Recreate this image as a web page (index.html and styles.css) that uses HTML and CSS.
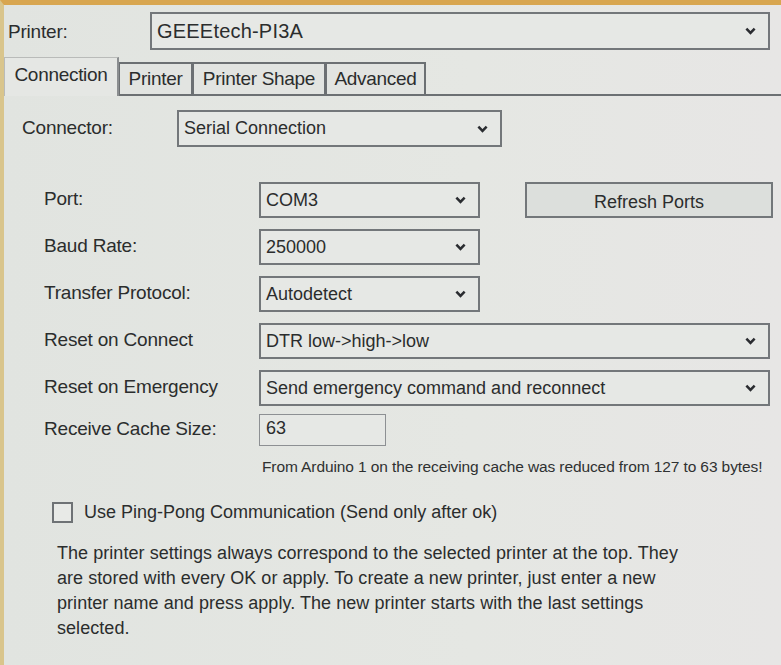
FILE: index.html
```
<!DOCTYPE html>
<html lang="en">

<head>
	<meta charset="UTF-8">
	<title>Printer Settings</title>
	<link rel="stylesheet" href="styles.css">
</head>

<body>
	<div class="window">
		<div class="printer-row">
			<span class="printer-label">Printer:</span>
			<div class="select printer-select">
				<span>GEEEtech-PI3A</span>
				<svg class="chevron" viewBox="0 0 12 8"><polyline points="1.5,1.5 6,6 10.5,1.5" /></svg>
			</div>
		</div>

		<div class="tabs">
			<div class="tab active">Connection</div>
			<div class="tab tab-printer">Printer</div>
			<div class="tab tab-shape">Printer Shape</div>
			<div class="tab tab-advanced">Advanced</div>
			<div class="tab-fill"></div>
		</div>

		<div class="panel">
			<div class="connector-row">
				<span class="connector-label">Connector:</span>
				<div class="select connector-select">
					<span>Serial Connection</span>
					<svg class="chevron" viewBox="0 0 12 8"><polyline points="1.5,1.5 6,6 10.5,1.5" /></svg>
				</div>
			</div>

			<div class="serial">
				<div class="field-row">
					<span class="field-label">Port:</span>
					<div class="select short">
						<span>COM3</span>
						<svg class="chevron" viewBox="0 0 12 8"><polyline points="1.5,1.5 6,6 10.5,1.5" /></svg>
					</div>
					<button class="refresh">Refresh Ports</button>
				</div>
				<div class="field-row">
					<span class="field-label">Baud Rate:</span>
					<div class="select short">
						<span>250000</span>
						<svg class="chevron" viewBox="0 0 12 8"><polyline points="1.5,1.5 6,6 10.5,1.5" /></svg>
					</div>
				</div>
				<div class="field-row">
					<span class="field-label">Transfer Protocol:</span>
					<div class="select short">
						<span>Autodetect</span>
						<svg class="chevron" viewBox="0 0 12 8"><polyline points="1.5,1.5 6,6 10.5,1.5" /></svg>
					</div>
				</div>
				<div class="field-row">
					<span class="field-label">Reset on Connect</span>
					<div class="select wide">
						<span>DTR low-&gt;high-&gt;low</span>
						<svg class="chevron" viewBox="0 0 12 8"><polyline points="1.5,1.5 6,6 10.5,1.5" /></svg>
					</div>
				</div>
				<div class="field-row">
					<span class="field-label">Reset on Emergency</span>
					<div class="select wide">
						<span>Send emergency command and reconnect</span>
						<svg class="chevron" viewBox="0 0 12 8"><polyline points="1.5,1.5 6,6 10.5,1.5" /></svg>
					</div>
				</div>
				<div class="field-row cache-row">
					<span class="field-label">Receive Cache Size:</span>
					<div class="text-input">63</div>
				</div>
			</div>

			<p class="note">From Arduino 1 on the receiving cache was reduced from 127 to 63 bytes!</p>

			<label class="check-row">
				<span class="checkbox"></span>
				<span>Use Ping-Pong Communication (Send only after ok)</span>
			</label>

			<p class="info">The printer settings always correspond to the selected printer at the top. They<br>
				are stored with every OK or apply. To create a new printer, just enter a new<br>
				printer name and press apply. The new printer starts with the last settings<br>
				selected.</p>
		</div>
	</div>
</body>

</html>
```

FILE: styles.css
```
html,
body {
	margin: 0;
	padding: 0;
}

body {
	width: 781px;
	height: 665px;
	overflow: hidden;
	background-color: #e3e6e2;
	font-family: 'Liberation Sans', Arial, sans-serif;
	color: #2b2d2d;
}

.window {
	height: 100%;
	box-sizing: border-box;
	border-top: 5px solid #d8a650;
	border-left: 4px solid #d9c58c;
	background: linear-gradient(90deg, #e1e4e0 0%, #e5e7e3 60%, #e7e6e5 100%);
}

.select {
	display: flex;
	align-items: center;
	justify-content: space-between;
	box-sizing: border-box;
	border: 2px solid #73777a;
	background-color: #e6e8e5;
	padding: 0 12px 0 5px;
	font-size: 18px;
}

.chevron {
	width: 11px;
	height: 8px;
	fill: none;
	stroke: #2a2c30;
	stroke-width: 2.8;
}

.printer-row {
	display: flex;
	align-items: center;
	padding: 7px 0 0 4px;
}

.printer-label {
	width: 142px;
	font-size: 19px;
	letter-spacing: -0.2px;
	padding-top: 2px;
}

.printer-select {
	width: 620px;
	height: 38px;
	padding-left: 5px;
	font-size: 20px;
	letter-spacing: 0.2px;
}

.tabs {
	display: flex;
	align-items: flex-end;
	margin-top: 7px;
	height: 39px;
}

.tab {
	box-sizing: border-box;
	height: 34px;
	border: 2px solid #6c7073;
	border-left-width: 1px;
	padding-top: 4px;
	text-align: center;
	font-size: 19px;
	letter-spacing: -0.3px;
	background-color: #e2e4e1;
}

.tab.active {
	height: 39px;
	width: 115px;
	padding: 6px 0 0 0;
	border: 1px solid #b9bbb9;
	border-bottom: none;
	border-right: 2px solid #8b8e90;
	background-color: #e5e7e4;
}

.tab-printer {
	width: 74px;
}

.tab-shape {
	width: 133px;
}

.tab-advanced {
	width: 100px;
}

.tab-fill {
	flex: 1;
	border-bottom: 2px solid #6c7073;
}

.panel {
	padding: 14px 0 0 18px;
}

.connector-row {
	display: flex;
	align-items: center;
}

.connector-label {
	width: 155px;
	font-size: 19px;
	letter-spacing: -0.2px;
	padding-bottom: 2px;
}

.connector-select {
	width: 325px;
	height: 37px;
}

.serial {
	display: flex;
	flex-direction: column;
	gap: 11px;
	margin: 35px 0 0 22px;
}

.field-row {
	display: flex;
	align-items: center;
	height: 36px;
}

.field-label {
	width: 215px;
	font-size: 19px;
	letter-spacing: -0.2px;
	padding-bottom: 2px;
}

.select.short {
	width: 221px;
	height: 36px;
}

.select.wide {
	width: 511px;
	height: 36px;
}

.refresh {
	margin-left: 45px;
	width: 248px;
	height: 36px;
	border: 2px solid #73777a;
	background-color: #dcdfdc;
	font-family: inherit;
	font-size: 18px;
	color: #2b2d2d;
	padding-top: 5px;
}

.cache-row {
	height: 32px;
	margin-top: -3px;
}

.text-input {
	box-sizing: border-box;
	width: 127px;
	height: 32px;
	border: 1px solid #8d9093;
	padding: 3px 0 0 6px;
	font-size: 18px;
	background-color: #e6e8e5;
}

.note {
	margin: 12px 0 0 240px;
	font-size: 15.5px;
	letter-spacing: -0.1px;
	color: #2f3131;
}

.check-row {
	display: flex;
	align-items: center;
	gap: 11px;
	margin: 26px 0 0 30px;
	font-size: 18px;
}

.checkbox {
	box-sizing: border-box;
	width: 21px;
	height: 21px;
	border: 2px solid #6e7275;
	background-color: #e8eae7;
}

.info {
	margin: 18px 0 0 35px;
	font-size: 18px;
	line-height: 25px;
	letter-spacing: 0.05px;
}
```
